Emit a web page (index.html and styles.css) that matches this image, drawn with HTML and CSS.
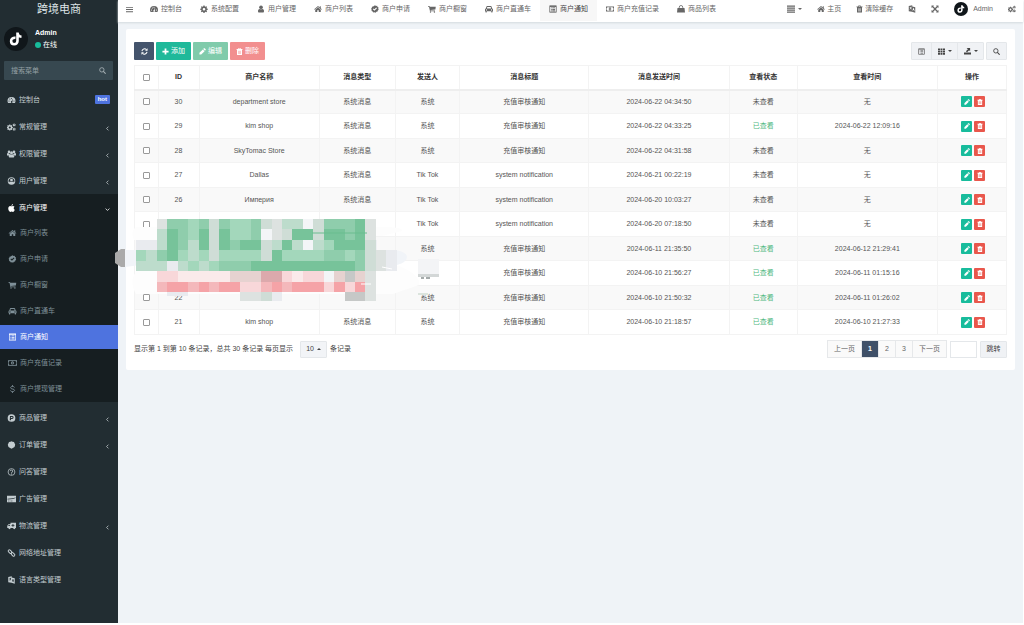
FILE: index.html
```html
<!DOCTYPE html>
<html lang="zh-CN">
<head>
<meta charset="utf-8">
<meta name="viewport" content="width=device-width, initial-scale=1">
<title>跨境电商</title>
<link rel="stylesheet" href="styles.css">
</head>
<body>
<svg class="sprite" aria-hidden="true">
  <symbol id="dash" viewBox="0 0 16 16"><path fill-rule="evenodd" d="M8 2a8 8 0 0 0-8 8c0 1.500.4 3 1.200 4h13.600c.8-1 1.200-2.500 1.200-4a8 8 0 0 0-8-8zM3 9a1.100 1.100 0 1 1 0 2.200A1.100 1.100 0 0 1 3 9zm1.700-4a1.100 1.100 0 1 1 0 2.200 1.100 1.100 0 0 1 0-2.200zM8 3.300a1.100 1.100 0 1 1 0 2.200 1.100 1.100 0 0 1 0-2.200zm5 5.700a1.100 1.100 0 1 1 0 2.200A1.100 1.100 0 0 1 13 9zm-3.500-2.500 1 .3-1 3.500a1.800 1.800 0 1 1-1-.3z"/></symbol>
  <symbol id="gear" viewBox="0 0 16 16"><path fill-rule="evenodd" d="M6.800 1h2.400l.4 2 1.300.6L12.600 2.400l1.600 1.600-1.100 1.700.5 1.300 2 .4v2.200l-2 .4-.5 1.300 1.100 1.700-1.600 1.600-1.700-1.100-1.300.5-.4 2H6.800l-.4-2-1.300-.5-1.700 1.100-1.600-1.600 1.100-1.700L2.400 10l-2-.4V7.400l2-.4.5-1.300L1.800 4l1.600-1.600 1.700 1.200L6.400 3zM8 5.800a2.600 2.600 0 1 0 0 5.200 2.600 2.600 0 0 0 0-5.200z"/></symbol>
  <symbol id="cogs" viewBox="0 0 18 16"><path fill-rule="evenodd" d="M4.600 3h2l.4 1.500 1 .4 1.300-.8 1.300 1.300-.8 1.300.4 1 1.500.4v2l-1.500.4-.4 1 .8 1.300-1.300 1.300L8 13.300l-1 .4-.4 1.500h-2l-.4-1.500-1-.4-1.300.8L.6 12.800l.8-1.300-.4-1-1-.3V8l1-.3.4-1-.8-1.300L1.900 4.100l1.300.8 1-.4zm1 4a2.100 2.100 0 1 0 0 4.200 2.100 2.100 0 0 0 0-4.200z"/><path fill-rule="evenodd" d="M13.500.8h1.500l.3 1.200 1.300.2.800 1.300-.8 1.200.3 1.200-1.300.8L14.300 6l-1.300.7-1.200-.8.2-1.300-.8-1.200.9-1.300 1.100-.1zm.8 1.900a1 1 0 1 0 0 2 1 1 0 0 0 0-2zM13.500 9.300H15l.3 1.200 1.300.2.8 1.300-.8 1.200.3 1.200-1.300.8-1.300-.7-1.300.7-1.200-.8.2-1.300-.8-1.200.9-1.300 1.100-.1zm.8 1.900a1 1 0 1 0 0 2 1 1 0 0 0 0-2z"/></symbol>
  <symbol id="users" viewBox="0 0 18 16"><circle cx="4" cy="3.800" r="2.600"/><circle cx="14" cy="3.800" r="2.600"/><circle cx="9" cy="5.500" r="3"/><path d="M0 11V8.500C0 7 1 6.200 2.200 6.200L5.500 8 4.500 11zM18 11V8.500c0-1.500-1-2.300-2.200-2.300L12.500 8l1 3zM3.500 13c0-3 1-4.600 3-4.600 1.500 1 3.500 1 5 0 2 0 3 1.600 3 4.600 0 1.500-1 2-2 2h-7c-1 0-2-.5-2-2z"/></symbol>
  <symbol id="usercircle" viewBox="0 0 16 16"><path fill-rule="evenodd" d="M8 .5a7.500 7.500 0 1 0 0 15 7.500 7.500 0 0 0 0-15zM8 2a6 6 0 0 1 5 9.300c-.5-1.700-1.500-2.300-2.500-2.300a4 4 0 0 1-5 0c-1 0-2 .6-2.500 2.300A6 6 0 0 1 8 2z"/><circle cx="8" cy="6.200" r="2.800"/></symbol>
  <symbol id="user" viewBox="0 0 16 16"><circle cx="8" cy="4.500" r="3.700"/><path d="M2 12.500C2 9.500 3 8 5 7.800c2 1.200 4 1.200 6 0 2 .2 3 1.700 3 4.700 0 1.500-.8 2.500-2.200 2.500H4.200C2.800 15 2 14 2 12.500z"/></symbol>
  <symbol id="apple" viewBox="0 0 16 16"><path d="M11 0c0 2-1.300 3.600-3.200 3.700C7.700 1.900 9.200.3 11 0zM8 4.700c.7 0 1.600-.8 3-.8 1 0 2.200.5 3 1.500-2.400 1.500-2 5 .6 6-.8 2.200-2.300 4.400-3.600 4.400-1 0-1.500-.6-2.700-.6s-1.800.6-2.800.6C3.500 15.800 1.500 12 1.500 9c0-3 1.800-4.900 3.800-4.900 1.200 0 2 .6 2.700.6z"/></symbol>
  <symbol id="home" viewBox="0 0 16 16"><path d="M8 2 .3 8.500l.9 1L8 3.900l6.800 5.600.9-1L13.500 6.600V2.500h-2v2.400zM8 5l-5.500 4.500V14h4v-3.500h3V14h4V9.500z"/></symbol>
  <symbol id="check" viewBox="0 0 16 16"><path fill-rule="evenodd" d="m8 .5 2 1.300 2.300-.2.800 2.200 2 1.200-.6 2.300.9 2.100-1.800 1.500-.4 2.300-2.400.3L9.200 15.300 7 14.400l-2.300.6-1.300-2L1.200 12l.1-2.400L.2 7.500 1.700 5.700 2 3.300l2.300-.5zM6.900 11.500l5-5-1.400-1.400-3.600 3.600-1.700-1.700-1.400 1.400z"/></symbol>
  <symbol id="cart" viewBox="0 0 16 16"><path d="M0 2h3l.5 1.500H15.500L14.800 9 5 10.200l.2.8H14v1.500H4L2 3.500H0z"/><circle cx="5" cy="14" r="1.400"/><circle cx="12.800" cy="14" r="1.400"/></symbol>
  <symbol id="car" viewBox="0 0 16 16"><path fill-rule="evenodd" d="M4.500 2h7c1 0 1.500.5 1.800 1.500L14.200 7C15.500 7.300 16 8 16 9v3.500h-1V14c0 1.500-2.500 1.500-2.500 0v-1.500h-9V14C3.500 15.500 1 15.500 1 14v-1.500H0V9c0-1 .5-1.700 1.800-2l.9-3.500C3 2.500 3.500 2 4.500 2zm0 1.800L3.800 7h8.400l-.7-3.200zM3 8.600a1.200 1.200 0 1 0 0 2.400 1.200 1.200 0 0 0 0-2.400zm10 0a1.200 1.200 0 1 0 0 2.400 1.200 1.200 0 0 0 0-2.400z"/></symbol>
  <symbol id="list" viewBox="0 0 16 16"><path fill-rule="evenodd" d="M1 1h14v14H1zm1.300 2.500v10.200h11.400V3.500zM4 5h1.500v1.300H4zm2.500 0H12v1.300H6.500zM4 8h1.500v1.300H4zm2.500 0H12v1.300H6.500zM4 11h1.500v1.300H4zm2.500 0H12v1.300H6.500z"/></symbol>
  <symbol id="money" viewBox="0 0 18 16"><path fill-rule="evenodd" d="M0 2.500h18v11H0zm3 1.300A2 2 0 0 1 1.300 5.500v5A2 2 0 0 1 3 12.200h12a2 2 0 0 1 1.700-1.700v-5A2 2 0 0 1 15 3.800zm6 .7c1.700 0 2.800 1.500 2.800 3.500s-1.100 3.500-2.800 3.500S6.200 10 6.200 8 7.300 4.500 9 4.500zm-.8 1.300v.9l.5-.1V9.500h-.7v.8h2.200v-.8h-.7V5.800z"/></symbol>
  <symbol id="dollar" viewBox="0 0 16 16"><path fill="none" stroke="currentColor" stroke-width="1.800" d="M12 4.800C11 3.300 9.800 2.900 8 2.900c-2.300 0-3.700 1-3.700 2.500 0 3.800 7.700 1.600 7.700 5.200 0 1.600-1.500 2.600-4 2.600-2 0-3.400-.7-4.300-2.200"/><path d="M7.200 0h1.600v3H7.200zM7.200 13h1.600v3H7.200z"/></symbol>
  <symbol id="product" viewBox="0 0 16 16"><path fill-rule="evenodd" d="M8 .3a7.700 7.700 0 1 0 0 15.400A7.700 7.700 0 0 0 8 .3zM5 4h4.300a2.900 2.900 0 0 1 0 5.800H7.200L6.500 12.500H4.500zm2 1.800-.6 2.400H9a1.200 1.200 0 0 0 0-2.400z"/></symbol>
  <symbol id="hex" viewBox="0 0 16 16"><path d="m8 .3 2 1.200 3 .4 1 2.600 1.300 2L15 9l-1 2.800-2.500 1.600L8 15.700l-3.500-2.300L2 11.800 1 9 .7 6.500 2 4.500l1-2.600 3-.4z"/></symbol>
  <symbol id="question" viewBox="0 0 16 16"><circle cx="8" cy="8" r="6.800" fill="none" stroke="currentColor" stroke-width="1.500"/><path fill="none" stroke="currentColor" stroke-width="1.700" d="M5.500 6.300C5.600 3.300 10.600 3.500 10.500 6.300 10.500 8 8 8 8 10"/><path d="M7 11h2v1.800H7z"/></symbol>
  <symbol id="card" viewBox="0 0 18 16"><path fill-rule="evenodd" d="M0 1.500h18v13H0zM1 7.500v1.700l11-1.200 5-2V5l-5 1.500zM2 11.500v1h3v-1zm5 0v1h4v-1z"/></symbol>
  <symbol id="truck" viewBox="0 0 18 16"><path fill-rule="evenodd" d="M7 1.500h11v10.700h-1.300a2.200 2.200 0 0 1-4.400 0H7.200a2.200 2.200 0 0 1-4.400 0H.5V7.500L3.500 4H7zM5.700 5.500H4.200L2 8h3.700zM11 3.800v2H9v1.700h2v2h1.800v-2h2V5.800h-2v-2z"/></symbol>
  <symbol id="chain" viewBox="0 0 16 16"><g fill="none" stroke="currentColor" stroke-width="2"><rect x="1" y="3" width="8" height="4.500" rx="2.200" transform="rotate(45 5 5.300)"/><rect x="7" y="8.500" width="8" height="4.500" rx="2.200" transform="rotate(45 11 10.700)"/></g></symbol>
  <symbol id="lang" viewBox="0 0 16 16"><path fill-rule="evenodd" d="m1.500 2 7-1.500V3L14.500 4.500v11L8 13.500l-6.500-1zm1.500 2.300v.9l2.200-.3c-.2 1.500-1 2.600-2 3.400l.6.800 1.700-1.600 1.300 1.300.6-.7-1.300-1.400.5-1.900.7-.1V3.600zM10.500 6l-1.500 5.200 1 .3.400-1.300 1.600.4.300 1.400 1 .3L11.700 6.300z"/></symbol>
  <symbol id="bag" viewBox="0 0 16 16"><path d="M1 6h14l1 9H0z"/><path fill="none" stroke="currentColor" stroke-width="1.600" d="M4.500 8V4.500a3.500 3.500 0 0 1 7 0V8"/></symbol>
  <symbol id="bars" viewBox="0 0 16 16"><path d="M0 2h16v2.200H0zM0 7h16v2.200H0zM0 12h16v2.200H0z"/></symbol>
  <symbol id="lines" viewBox="0 0 16 16"><path d="M0 1h16v2.500H0zM0 5h16v2.500H0zM0 9h16v2.500H0zM0 13h16v2.500H0z"/></symbol>
  <symbol id="trash" viewBox="0 0 16 16"><path fill-rule="evenodd" d="M5.500 0h5l.8 2H15v2h-1.300v12H2.300V4H1V2h3.700zM6.500 1.300 6.200 2h3.600l-.3-.7zM4.900 6v7.500h1V6zm2.600 0v7.500h1V6zm2.600 0v7.500h1V6z"/></symbol>
  <symbol id="expand" viewBox="0 0 16 16"><path d="M1 1h5L4.500 2.700 8 6.200l3.500-3.500L10 1h5v5l-1.700-1.500L9.800 8l3.500 3.500L15 10v5h-5l1.500-1.700L8 9.800l-3.500 3.500L6 15H1v-5l1.700 1.500L6.200 8 2.700 4.500 1 6z"/></symbol>
  <symbol id="refresh" viewBox="0 0 16 16"><path fill="none" stroke="currentColor" stroke-width="2.400" d="M2.200 7a6 6 0 0 1 10.300-3.200M13.800 9A6 6 0 0 1 3.500 12.200"/><path d="M15 .8V6.500H9.300zM1 15.200V9.500h5.700z"/></symbol>
  <symbol id="plus" viewBox="0 0 16 16"><path d="M6 1h4v5h5v4h-5v5H6v-5H1V6h5z"/></symbol>
  <symbol id="pencil" viewBox="0 0 16 16"><path d="M1 15v-4l7.800-7.800 4 4L5 15zM9.700 2.300 11.200.8c.6-.6 1.300-.6 1.900 0l2.100 2.100c.6.6.6 1.300 0 1.900l-1.500 1.500z"/></symbol>
  <symbol id="grid" viewBox="0 0 16 16"><path d="M0 1h4.500v4H0zM5.700 1h4.500v4H5.700zM11.400 1H16v4h-4.600zM0 6.200h4.500v4H0zM5.700 6.200h4.500v4H5.700zM11.400 6.200H16v4h-4.600zM0 11.400h4.500v4H0zM5.700 11.400h4.500v4H5.700zM11.400 11.400H16v4h-4.600z"/></symbol>
  <symbol id="export" viewBox="0 0 16 16"><path d="M6 0h8v7.500l-2.300-2.200L7 9.800 4.300 7.200 9 2.700zM0 10.500h16V15H0z"/></symbol>
  <symbol id="search" viewBox="0 0 16 16"><circle cx="6.500" cy="6.500" r="5" fill="none" stroke="currentColor" stroke-width="2"/><path stroke="currentColor" stroke-width="2.400" stroke-linecap="round" d="m10.500 10.500 4 4"/></symbol>
  <symbol id="left" viewBox="0 0 16 16"><path fill="none" stroke="currentColor" stroke-width="2.500" d="M11 2 5 8l6 6"/></symbol>
  <symbol id="down" viewBox="0 0 16 16"><path fill="none" stroke="currentColor" stroke-width="2.500" d="m2 5 6 6 6-6"/></symbol>
  <symbol id="tok" viewBox="0 0 24 24"><circle cx="12" cy="12" r="12" fill="#10161a"/><path fill="none" stroke="#fff" stroke-width="2.600" d="M11.500 10.800c-2.600-.3-4.400 1-4.400 3.200 0 2 1.400 3.200 3.100 3.200 2 0 3.300-1.300 3.300-3.300V5.500c.2 2.600 1.600 4 4 4.200"/></symbol>
</svg>

<div class="app">
  <aside class="sidebar">
    <a class="brand" href="#">跨境电商</a>
    <div class="profile">
      <svg class="avatar"><use href="#tok"/></svg>
      <div class="who"><strong>Admin</strong><span class="online">在线</span></div>
    </div>
    <form class="search">
      <input type="text" placeholder="搜索菜单" aria-label="搜索菜单">
      <button type="button" aria-label="搜索"><svg class="ic"><use href="#search"/></svg></button>
    </form>
    <nav class="menu">
      <a href="#"><svg class="ic"><use href="#dash"/></svg>控制台<span class="hot">hot</span></a>
      <a href="#"><svg class="ic"><use href="#cogs"/></svg>常规管理<svg class="arrow"><use href="#left"/></svg></a>
      <a href="#"><svg class="ic"><use href="#users"/></svg>权限管理<svg class="arrow"><use href="#left"/></svg></a>
      <a href="#"><svg class="ic"><use href="#usercircle"/></svg>用户管理<svg class="arrow"><use href="#left"/></svg></a>
      <div class="open">
        <a href="#"><svg class="ic"><use href="#apple"/></svg>商户管理<svg class="arrow"><use href="#down"/></svg></a>
        <div class="sub">
          <a href="#"><svg class="ic"><use href="#home"/></svg>商户列表</a>
          <a href="#"><svg class="ic"><use href="#check"/></svg>商户申请</a>
          <a href="#"><svg class="ic"><use href="#cart"/></svg>商户橱窗</a>
          <a href="#"><svg class="ic"><use href="#car"/></svg>商户直通车</a>
          <a href="#" class="current"><svg class="ic"><use href="#list"/></svg>商户通知</a>
          <a href="#"><svg class="ic"><use href="#money"/></svg>商户充值记录</a>
          <a href="#"><svg class="ic"><use href="#dollar"/></svg>商户提现管理</a>
        </div>
      </div>
      <a href="#"><svg class="ic"><use href="#product"/></svg>商品管理<svg class="arrow"><use href="#left"/></svg></a>
      <a href="#"><svg class="ic"><use href="#hex"/></svg>订单管理<svg class="arrow"><use href="#left"/></svg></a>
      <a href="#"><svg class="ic"><use href="#question"/></svg>问答管理</a>
      <a href="#"><svg class="ic"><use href="#card"/></svg>广告管理</a>
      <a href="#"><svg class="ic"><use href="#truck"/></svg>物流管理<svg class="arrow"><use href="#left"/></svg></a>
      <a href="#"><svg class="ic"><use href="#chain"/></svg>网络地址管理</a>
      <a href="#"><svg class="ic"><use href="#lang"/></svg>语言类型管理</a>
    </nav>
  </aside>

  <div class="page">
    <header class="topbar">
      <button class="toggle" type="button" aria-label="菜单"><svg class="ic"><use href="#bars"/></svg></button>
      <nav class="tabs">
        <a href="#"><svg class="ic"><use href="#dash"/></svg>控制台</a>
        <a href="#"><svg class="ic"><use href="#gear"/></svg>系统配置</a>
        <a href="#"><svg class="ic"><use href="#user"/></svg>用户管理</a>
        <a href="#"><svg class="ic"><use href="#home"/></svg>商户列表</a>
        <a href="#"><svg class="ic"><use href="#check"/></svg>商户申请</a>
        <a href="#"><svg class="ic"><use href="#cart"/></svg>商户橱窗</a>
        <a href="#"><svg class="ic"><use href="#car"/></svg>商户直通车</a>
        <a href="#" class="current"><svg class="ic"><use href="#list"/></svg>商户通知</a>
        <a href="#"><svg class="ic"><use href="#money"/></svg>商户充值记录</a>
        <a href="#"><svg class="ic"><use href="#bag"/></svg>商品列表</a>
      </nav>
      <nav class="tools">
        <a href="#" aria-label="标签"><svg class="ic"><use href="#lines"/></svg><i class="caret"></i></a>
        <a href="#"><svg class="ic"><use href="#home"/></svg>主页</a>
        <a href="#"><svg class="ic narrow"><use href="#trash"/></svg>清除缓存</a>
        <a href="#" aria-label="语言"><svg class="ic"><use href="#lang"/></svg></a>
        <a href="#" aria-label="全屏"><svg class="ic"><use href="#expand"/></svg></a>
        <a href="#"><svg class="face"><use href="#tok"/></svg>Admin</a>
        <a href="#" aria-label="设置"><svg class="ic"><use href="#cogs"/></svg></a>
      </nav>
    </header>

    <main class="card">
      <div class="bar">
        <button class="btn dark" type="button" aria-label="刷新"><svg class="ic"><use href="#refresh"/></svg></button>
        <button class="btn green" type="button"><svg class="ic"><use href="#plus"/></svg>添加</button>
        <button class="btn green-off" type="button" disabled><svg class="ic"><use href="#pencil"/></svg>编辑</button>
        <button class="btn red-off" type="button" disabled><svg class="ic"><use href="#trash"/></svg>删除</button>
        <div class="group">
          <button type="button" aria-label="切换"><svg class="ic"><use href="#list"/></svg></button>
          <button type="button" aria-label="列"><svg class="ic"><use href="#grid"/></svg><i class="caret"></i></button>
          <button type="button" aria-label="导出"><svg class="ic"><use href="#export"/></svg><i class="caret"></i></button>
        </div>
        <div class="group single"><button type="button" aria-label="查找"><svg class="ic"><use href="#search"/></svg></button></div>
      </div>

      <table class="data">
        <colgroup><col class="c-check"><col class="c-id"><col class="c-name"><col class="c-type"><col class="c-from"><col class="c-title"><col class="c-time"><col class="c-state"><col class="c-time"><col class="c-act"></colgroup>
        <thead>
          <tr><th><input type="checkbox" aria-label="全选"></th><th>ID</th><th>商户名称</th><th>消息类型</th><th>发送人</th><th>消息标题</th><th>消息发送时间</th><th>查看状态</th><th>查看时间</th><th>操作</th></tr>
        </thead>
        <tbody>
          <tr><td><input type="checkbox" aria-label="30"></td><td>30</td><td>department store</td><td>系统消息</td><td>系统</td><td>充值审核通知</td><td>2024-06-22 04:34:50</td><td>未查看</td><td>无</td><td><button class="mini edit" aria-label="编辑"><svg><use href="#pencil"/></svg></button><button class="mini del" aria-label="删除"><svg><use href="#trash"/></svg></button></td></tr>
          <tr><td><input type="checkbox" aria-label="29"></td><td>29</td><td>kim shop</td><td>系统消息</td><td>系统</td><td>充值审核通知</td><td>2024-06-22 04:33:25</td><td class="seen">已查看</td><td>2024-06-22 12:09:16</td><td><button class="mini edit" aria-label="编辑"><svg><use href="#pencil"/></svg></button><button class="mini del" aria-label="删除"><svg><use href="#trash"/></svg></button></td></tr>
          <tr><td><input type="checkbox" aria-label="28"></td><td>28</td><td>SkyTomac Store</td><td>系统消息</td><td>系统</td><td>充值审核通知</td><td>2024-06-22 04:31:58</td><td>未查看</td><td>无</td><td><button class="mini edit" aria-label="编辑"><svg><use href="#pencil"/></svg></button><button class="mini del" aria-label="删除"><svg><use href="#trash"/></svg></button></td></tr>
          <tr><td><input type="checkbox" aria-label="27"></td><td>27</td><td>Dallas</td><td>系统消息</td><td>Tik Tok</td><td>system notification</td><td>2024-06-21 00:22:19</td><td>未查看</td><td>无</td><td><button class="mini edit" aria-label="编辑"><svg><use href="#pencil"/></svg></button><button class="mini del" aria-label="删除"><svg><use href="#trash"/></svg></button></td></tr>
          <tr><td><input type="checkbox" aria-label="26"></td><td>26</td><td>Империя</td><td>系统消息</td><td>Tik Tok</td><td>system notification</td><td>2024-06-20 10:03:27</td><td>未查看</td><td>无</td><td><button class="mini edit" aria-label="编辑"><svg><use href="#pencil"/></svg></button><button class="mini del" aria-label="删除"><svg><use href="#trash"/></svg></button></td></tr>
          <tr><td><input type="checkbox" aria-label="选择"></td><td></td><td></td><td></td><td>Tik Tok</td><td>system notification</td><td>2024-06-20 07:18:50</td><td>未查看</td><td>无</td><td><button class="mini edit" aria-label="编辑"><svg><use href="#pencil"/></svg></button><button class="mini del" aria-label="删除"><svg><use href="#trash"/></svg></button></td></tr>
          <tr class="hover"><td></td><td></td><td></td><td></td><td>系统</td><td>充值审核通知</td><td>2024-06-11 21:35:50</td><td class="seen">已查看</td><td>2024-06-12 21:29:41</td><td><button class="mini edit" aria-label="编辑"><svg><use href="#pencil"/></svg></button><button class="mini del" aria-label="删除"><svg><use href="#trash"/></svg></button></td></tr>
          <tr><td></td><td></td><td></td><td></td><td></td><td>充值审核通知</td><td>2024-06-10 21:56:27</td><td class="seen">已查看</td><td>2024-06-11 01:15:16</td><td><button class="mini edit" aria-label="编辑"><svg><use href="#pencil"/></svg></button><button class="mini del" aria-label="删除"><svg><use href="#trash"/></svg></button></td></tr>
          <tr><td><input type="checkbox" aria-label="22"></td><td>22</td><td></td><td></td><td>系统</td><td>充值审核通知</td><td>2024-06-10 21:50:32</td><td class="seen">已查看</td><td>2024-06-11 01:26:02</td><td><button class="mini edit" aria-label="编辑"><svg><use href="#pencil"/></svg></button><button class="mini del" aria-label="删除"><svg><use href="#trash"/></svg></button></td></tr>
          <tr><td><input type="checkbox" aria-label="21"></td><td>21</td><td>kim shop</td><td>系统消息</td><td>系统</td><td>充值审核通知</td><td>2024-06-10 21:18:57</td><td class="seen">已查看</td><td>2024-06-10 21:27:33</td><td><button class="mini edit" aria-label="编辑"><svg><use href="#pencil"/></svg></button><button class="mini del" aria-label="删除"><svg><use href="#trash"/></svg></button></td></tr>
        </tbody>
      </table>

      <footer class="foot">
        <span>显示第 1 到第 10 条记录，总共 30 条记录 每页显示</span>
        <button class="size" type="button">10<i class="caret up"></i></button>
        <span>条记录</span>
        <nav class="pager"><a href="#">上一页</a><a href="#" class="current">1</a><a href="#">2</a><a href="#">3</a><a href="#">下一页</a></nav>
        <input class="goto" type="text" aria-label="页码">
        <button class="jump" type="button">跳转</button>
      </footer>

      <!-- Censor blocks laid over the private rows -->
      <svg class="censor" viewBox="114 214 330 92" aria-hidden="true">
        <path fill="#fdfdfd" d="M136 227h252q16 1 14 4l-20 5h-22v4H134q-4-8 2-13z"/>
        <path fill="#eff1f4" d="M136 240h241v10H136z"/>
        <path fill="#f1f4f8" d="M125 250h270q12 2 12 7t-10 8H140l-15 2z"/>
        <path fill="#fdfdfd" d="M134 275q4-10 20-9h245q16 6 20 15v4l-26 9H136q-6-10-2-19z"/>
        <path fill="#aaa" d="m115 253 6-4h4v18h-4l-6-4z"/>
        <path fill="#f3f4f6" d="M418 259h21v16h-21z"/>
        <path fill="#d3d7d7" d="M418 274h21v3h-21z"/>
        <path fill="#a5abab" d="M421 277h3v2h-3zM426 277h4v2h-4z"/>
        <path fill="#dbe4dd" d="M418 293h10v2h-10z"/>
        <g id="mosaic" shape-rendering="crispEdges" transform="translate(136 219) scale(10.430)"></g>
        <path fill="none" stroke="#6abd8f" d="M312 233h55"/>
        <path fill="none" stroke="#fff" d="m382 267 10 2M361 284h10"/>
      </svg>
    </main>
  </div>
</div>
<script src="mosaic.js"></script>
</body>
</html>
```
FILE: mosaic.js
```js
const palette = {
  D: "#77c39a", G: "#8fcdac", M: "#a3d7bb", P: "#bddccc", L: "#cfddd6",
  g: "#dde2e0", e: "#e9ebef", w: "#f3f5f7", r: "#f5a3a7", q: "#f4b8bb",
  p: "#f8d7d9", o: "#faeaea", s: "#dca9ac", t: "#e6d2d0", z: "#c6c8c7"
};
const rows = [
  "..gGGMGLGMMGLgPPwLGGGDg..",
  "..PDGMDLDMMGwgLDDLDDGDg..",
  "eePDGPDLDGDDLPDPwPMDDDL..",
  "MPGDMPMLMMMMLDMMMMGGMGLge",
  "PPPePMPMGGGDDDDDDDDDDGLge",
  "..ppoooootttssporpwtztg..".replace("orp", "opp"),
  "..qrrqrqrrppqrqrrrprprg..",
  "...ee.....ggLe......zzg.."
];
const group = document.getElementById("mosaic");
rows.forEach((row, y) => {
  [...row].forEach((code, x) => {
    if (!palette[code]) return;
    const cell = document.createElementNS("http://www.w3.org/2000/svg", "rect");
    const lastRow = x < 5 ? 0.4 : 0.85;
    cell.setAttribute("x", x);
    cell.setAttribute("y", y);
    cell.setAttribute("width", 1);
    cell.setAttribute("height", y === 7 ? lastRow : 1);
    cell.setAttribute("fill", palette[code]);
    group.appendChild(cell);
  });
});
```
FILE: styles.css
```css
* { box-sizing: border-box; }
body {
  margin: 0;
  background: #fff;
  color: #444;
  font: 7px/10px "Liberation Sans", "Noto Sans CJK SC", sans-serif;
}
a { color: inherit; text-decoration: none; }
button, input { font: inherit; color: inherit; margin: 0; padding: 0; border: 0; border-radius: 0; background: none; }
button { display: inline-flex; align-items: center; justify-content: center; }
svg { fill: currentColor; flex: none; }
.sprite { position: absolute; width: 0; height: 0; }
.ic { width: 8px; height: 8px; }
.caret { border: 2px solid transparent; border-top-color: currentColor; border-bottom: 0; margin-left: 3px; }
.caret.up { border-top: 0; border-bottom: 2px solid currentColor; }

.app { display: flex; min-height: 100vh; padding: 0 1px 2px 0; }

/* Sidebar */
.sidebar { width: 118px; flex: none; background: #222d32; color: #c3ccd0; }
.brand { display: block; height: 18px; line-height: 18px; font-size: 11px; text-align: center; color: #dfe5e8; }
.profile { display: flex; align-items: center; gap: 7px; padding: 9px 4px 10px; }
.avatar { width: 24px; height: 24px; }
.who { display: flex; flex-direction: column; gap: 2px; color: #fff; }
.online { display: flex; align-items: center; gap: 2px; }
.online::before { content: ""; width: 6px; height: 6px; border-radius: 50%; background: #18bc9c; }
.search { display: flex; align-items: center; height: 19px; margin: 0 5px 6px 4px; padding: 0 7px; background: #374850; border-radius: 1px; }
.search input { flex: 1; min-width: 0; }
.search input::placeholder { color: #95a0a5; opacity: 1; }
.search .ic { width: 7px; height: 7px; color: #a5afb3; }
.menu a { display: flex; align-items: center; gap: 3px; height: 27px; padding: 0 8px 0 7px; }
.menu .ic { width: 9px; }
.arrow { width: 5px; height: 5px; margin: 3px 0 0 auto; }
.hot { margin-left: auto; padding: 0 3px; height: 9px; line-height: 8px; border-radius: 1px; background: #4e73df; color: #fff; font-weight: bold; font-size: 6px; }
.menu .open { background: #161e21; color: #fff; padding-bottom: 1px; margin-bottom: 2px; }
.sub { display: grid; gap: 2px; color: #7f9098; }
.sub a { height: 24px; padding-left: 8px; }
.sub .current { background: #4e73df; color: #fff; }

/* Top bar */
.page { flex: 1; min-width: 0; background: #eff3f7; }
.topbar { display: flex; height: 22px; background: #fff; box-shadow: 0 1px 2px #d4dade; color: #666; }
.topbar a, .toggle { display: flex; align-items: center; gap: 3px; height: 21px; padding-bottom: 3px; white-space: nowrap; }
.toggle { width: 23px; }
.toggle .ic { width: 7px; height: 7px; }
.tabs { display: flex; }
.tabs a { padding-left: 9px; padding-right: 9px; }
.tabs .current { background: #f7f7f7; color: #444; }
.tools { display: flex; gap: 15px; margin-left: auto; padding-right: 7px; }
.tools a { gap: 2px; }
.tools .narrow { width: 7px; }
.tools .caret { margin-left: 1px; }
.tools .face { width: 14px; height: 14px; margin-right: 3px; }

/* Panel */
.card { position: relative; margin: 7px 8px; padding: 13px 8px 12px; background: #fff; border-radius: 2px; }
.bar { display: flex; gap: 2px; margin-bottom: 5px; }
.btn { height: 18px; width: 35px; gap: 2px; border-radius: 1px; color: #fff; }
.btn .ic { width: 7px; height: 7px; }
.dark { width: 20px; background: #44546c; }
.green { background: #1fb99a; }
.green-off { background: #80cbab; }
.red-off { background: #f28f8f; }
.group { display: flex; margin-left: auto; border: 1px solid #e4e7ea; border-radius: 1px; background: #f0f2f5; }
.group button { width: 26px; height: 16px; }
.group button:first-child { width: 19px; }
.group button + button { border-left: 1px solid #e4e7ea; }
.group .ic { width: 7px; height: 7px; }
.group.single { margin-left: 0; }

.data { width: 100%; table-layout: fixed; border-collapse: collapse; text-align: center; }
.c-check { width: 2.7%; }
.c-id { width: 4.7%; }
.c-name { width: 13.8%; }
.c-type { width: 8.7%; }
.c-from { width: 7.4%; }
.c-title { width: 14.8%; }
.c-time { width: 16.1%; }
.c-state { width: 7.8%; }
.c-act { width: 7.9%; }
.data th, .data td { padding: 0; border: 1px solid #f3f3f3; vertical-align: middle; }
.data th { height: 24px; border-bottom: 2px solid #eee; color: #333; }
.data td { height: 24px; color: #555; }
.data tbody tr:nth-child(even) td { height: 25px; }
.data tbody tr:nth-child(odd) { background: #f9f9f9; }
.data tbody .hover { background: #f3f5f8; }
.data .seen { color: #4fb87f; }
.data input { appearance: none; display: block; width: 7px; height: 7px; margin: 0 auto; border: 1px solid #999; border-radius: 1px; background: #fff; }
.mini { width: 11px; height: 11px; margin: 0 0 0 2px; border-radius: 1px; color: #fff; vertical-align: middle; }
.mini svg { width: 6px; height: 6px; }
.edit { background: #18bc9c; }
.del { background: #e9574c; }

.foot { display: flex; align-items: center; gap: 3px; padding-top: 5px; }
.size { width: 27px; height: 17px; margin-left: 4px; border: 1px solid #e4e7ea; background: #f2f4f7; border-radius: 1px; }
.pager { display: flex; margin-left: auto; border: 1px solid #e6e8ea; background: #fafafa; }
.pager a { min-width: 17px; height: 16px; line-height: 16px; padding: 0 6px; text-align: center; color: #666; }
.pager a + a { border-left: 1px solid #e6e8ea; }
.pager .current { background: #3f5068; color: #fff; font-weight: bold; }
.goto { width: 27px; height: 17px; border: 1px solid #e4e7ea; text-align: center; }
.jump { width: 27px; height: 17px; border: 1px solid #e4e7ea; background: #f0f2f5; border-radius: 1px; }

.censor { position: absolute; left: -12px; top: 185px; width: 330px; height: 92px; pointer-events: none; }
```
